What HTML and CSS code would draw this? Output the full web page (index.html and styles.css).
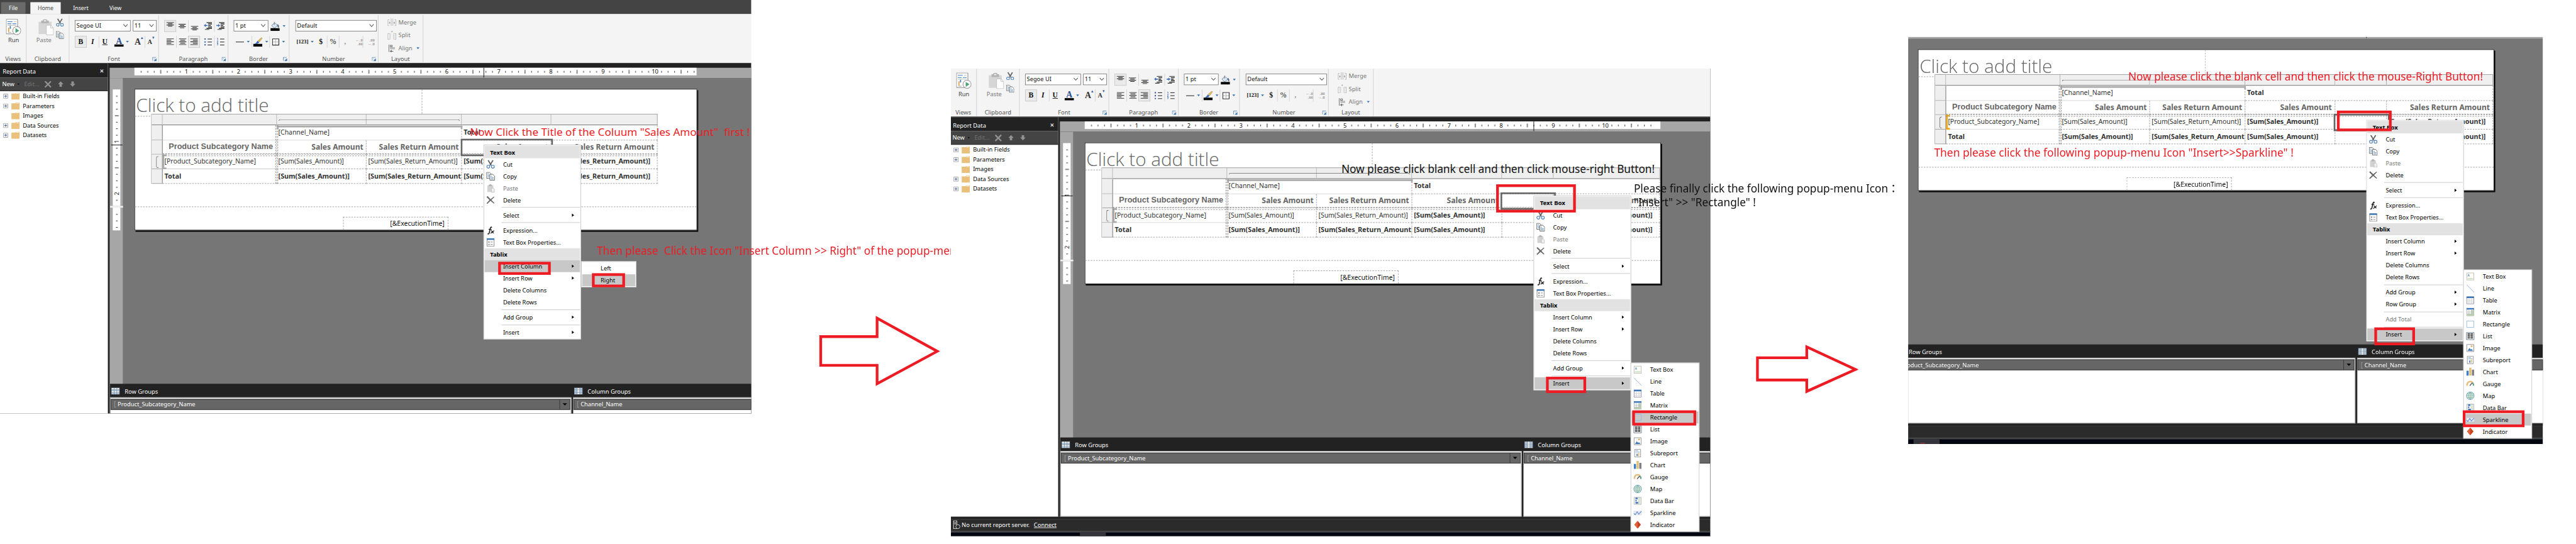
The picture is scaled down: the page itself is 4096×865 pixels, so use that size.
FILE: index.html
```html
<!DOCTYPE html>
<html lang="en">
<head>
<meta charset="utf-8">
<title>Report Builder steps</title>
<link rel="stylesheet" href="styles.css">
</head>
<body>
<svg class="defs" width="0" height="0" aria-hidden="true">
  <defs>
    <pattern id="hticks" width="96" height="14" patternUnits="userSpaceOnUse">
      <path d="M12.5 6v3M24.500 6v3M36.500 6v3M60.500 6v3M72.500 6v3M84.500 6v3M48.500 4v7" stroke="#000" fill="none"/>
    </pattern>
    <pattern id="vticks" width="14" height="96" patternUnits="userSpaceOnUse">
      <path d="M6 12.500h3M6 24.500h3M6 36.500h3M6 60.500h3M6 72.500h3M6 84.500h3M4 48.500h7" stroke="#000" fill="none"/>
    </pattern>
    <symbol id="run" viewBox="0 0 28 30"><path d="M.5.5h21v27H.5z" fill="#fff" stroke="#777"/><path d="M3 5h9M3 9h7M12 9h7" stroke="#3f7fc1" stroke-width="1.300"/><path d="M14 5h5M3 12h16M14 16h4" stroke="#b5b5b5"/><path d="M4 24v-8h2v8z" fill="#e0a040"/><path d="M7 18v-5h2v5z" fill="#3f7fc1"/><path d="M4 25h6" stroke="#999"/><circle cx="20" cy="21.500" r="7.500" fill="#fff" stroke="#777"/><path d="M17.500 17l7 4.500-7 4.500z" fill="#4ba37a"/></symbol>
    <symbol id="paste" viewBox="0 0 28 30"><path d="M0 5h24v23H0z" fill="#d6d6d6"/><path d="M5 3h3V1.500Q12-1 16 1.500V3h3v5H5z" fill="#b4b4b4"/><path d="M10 2.500h4v2h-4z" fill="#f4f4f4"/><path d="M14.500 11.500h8l5 5v13h-13z" fill="#fff" stroke="#bbb"/><path d="M22.500 11.500v5h5" fill="none" stroke="#bbb"/></symbol>
    <symbol id="cut" viewBox="0 0 16 16"><path d="M3.500.5l5.800 9.500M12.500.5L6.700 10" stroke="#666" stroke-width="2.200" fill="none"/><circle cx="3.800" cy="12.500" r="2.700" fill="none" stroke="#4a80b8" stroke-width="1.300"/><circle cx="12.200" cy="12.500" r="2.700" fill="none" stroke="#4a80b8" stroke-width="1.300"/></symbol>
    <symbol id="copy" viewBox="0 0 16 16"><path d="M.6 1h5.400l3 3v8H.6z" fill="#fff" stroke="#666" stroke-width="1.100"/><path d="M2.200 4h2.500M2.200 6.500h4M2.200 9h4" stroke="#4a80b8"/><path d="M6.600 4.500H12l3.400 3.300v7.600H6.600z" fill="#fff" stroke="#666" stroke-width="1.100"/><path d="M8.300 8h2.500M8.300 10.500h5.400M8.300 13h5.400" stroke="#4a80b8"/></symbol>
    <symbol id="paste-s" viewBox="0 0 16 16"><path d="M2 3h11v12H2z" fill="#d2d2d2"/><path d="M4.500 2H6V.5h3V2h1.500v2.500h-6z" fill="#b4b4b4"/><path d="M9.500 8h3.300l2.200 2v5.500H9.500z" fill="#f0f0f0" stroke="#bbb"/></symbol>
    <symbol id="del" viewBox="0 0 16 16"><path d="M.5 2.500L2.500.8 8 6.500 14 1.500l1 .8L9.500 8l5.500 5.500-1 1.200L7.800 9.500 2 15.200.5 14 6 8z" fill="#666"/></symbol>
    <symbol id="del-b" viewBox="0 0 13 13"><path d="M1 1l11 11M12 1L1 12" stroke="#929292" stroke-width="2.600" fill="none"/></symbol>
    <symbol id="fx" viewBox="0 0 16 16"><path d="M10.500 2.800Q8.500.5 7.500 4L5.500 12.500Q4.800 15.500 2.500 14.200" fill="none" stroke="#111" stroke-width="1.700"/><path d="M4.500 6h5.500M8.500 9q1.500-1 2.500 1.500t3 2M14.500 8.500L8 13.500" fill="none" stroke="#111" stroke-width="1.400"/></symbol>
    <symbol id="prop" viewBox="0 0 16 16"><path d="M1.500 1.500h13v14h-13z" fill="#fff" stroke="#777"/><path d="M1 .5h14v3H1z" fill="#4179b5"/><circle cx="5" cy="7.500" r="1.200" fill="#666"/><circle cx="5" cy="12" r="1" fill="none" stroke="#777"/><path d="M8 7.500h4M8 12h4" stroke="#777"/></symbol>
    <symbol id="chev" viewBox="0 0 9 6"><path d="M.7.8L4.500 5 8.300.8" fill="none" stroke="#555" stroke-width="1.200"/></symbol>
    <symbol id="tri" viewBox="0 0 6 4"><path d="M.3.3h5.400L3 3.700z" fill="#3c74b0"/></symbol>
    <symbol id="launch" viewBox="0 0 8 8"><path d="M.6 7V.7h6.500" fill="none" stroke="#4a80b8"/><path d="M3 3l3.500 3.500M7.400 3v4.500H3z" stroke="#4a80b8" fill="#4a80b8" stroke-width=".7"/></symbol>
    <symbol id="al" viewBox="0 0 14 12"><path d="M0 .6h14M0 3.300h9M0 6h14M0 8.700h9M0 11.400h14" stroke="#000" stroke-width="1.100"/></symbol>
    <symbol id="ac" viewBox="0 0 14 12"><path d="M0 .6h14M2.500 3.300h9M0 6h14M2.500 8.700h9M0 11.400h14" stroke="#000" stroke-width="1.100"/></symbol>
    <symbol id="ar" viewBox="0 0 14 12"><path d="M0 .6h14M5 3.300h9M0 6h14M5 8.700h9M0 11.400h14" stroke="#000" stroke-width="1.100"/></symbol>
    <symbol id="va" viewBox="0 0 14 8"><path d="M0 .6h14M3 2.900h8M0 5.200h14M3 7.400h8" stroke="#000" stroke-width="1.100"/></symbol>
    <symbol id="ind" viewBox="0 0 16 14"><path d="M5 .6h10M8 3.300h7M8 6h5M8 8.700h7M5 11.400h10M2 13.600h8" stroke="#000" stroke-width="1.300"/><path d="M0 6l3.500-3v2H7v2H3.500v2z" fill="#3a6fb5"/></symbol>
    <symbol id="out" viewBox="0 0 16 14"><path d="M5 .6h10M8 3.300h7M8 6h5M8 8.700h7M5 11.400h10M2 13.600h8" stroke="#000" stroke-width="1.300"/><path d="M7 6L3.500 3v2H0v2h3.500v2z" fill="#3a6fb5"/></symbol>
    <symbol id="bul" viewBox="0 0 14 14"><path d="M6 2h8M6 7.500h8M6 13h8" stroke="#111" stroke-width="1.100"/><path d="M0 .8h2.500v2.400H0zM0 6.300h2.500v2.400H0zM0 11.600h2.500V14H0z" fill="#3a62a8"/></symbol>
    <symbol id="num" viewBox="0 0 14 14"><path d="M6 2h8M6 7.500h8M6 13h8" stroke="#111" stroke-width="1.100"/><path d="M0 1l1.500-.8V4M0 5.600h2.300L.3 9h2.400M0 10.500h2.500l-1.200 1.400q1.800 1-1.300 1.900" fill="none" stroke="#3a62a8" stroke-width=".9"/></symbol>
    <symbol id="bucket" viewBox="0 0 17 17"><path d="M2 7L8 2l5 5-6 5z" fill="#dfe8f2" stroke="#5b7da8"/><path d="M7 0v6M13 5q3 1 2 6-2-1-2-5z" stroke="#6b6b6b" fill="#3a6fb5"/><path d="M0 12h17v5H0z"/></symbol>
    <symbol id="brush" viewBox="0 0 17 17"><path d="M15.500 0L17 1.500 11 9 8 7z" fill="#e0bb62" stroke="#8a6d2c" stroke-width=".5"/><path d="M8 6.500l3 2.500q-2 4-8 2.500 3-1 5-5z" fill="#2f66bd"/><path d="M0 12h17v5H0z"/></symbol>
    <symbol id="bord" viewBox="0 0 13 13"><path d="M.6.6h11.800v11.800H.6z" fill="#fff" stroke="#000" stroke-width="1.200"/><path d="M6.500 2v9M2 6.500h9" stroke="#555" stroke-dasharray="1 1"/></symbol>
    <symbol id="merge" viewBox="0 0 16 14"><path d="M3 2.500H.5v11H3M13 2.500h2.500v11H13" fill="none" stroke="#aaa"/><path d="M5 0h6v14H5z" fill="#dcdcdc"/><path d="M2.500 5.500l3 2.500-3 2.500zM13.500 5.500l-3 2.500 3 2.500z" fill="#aaa"/></symbol>
    <symbol id="split" viewBox="0 0 16 16"><path d="M3 5H.5v10.500H3M13 5h2.500v10.500H13" fill="none" stroke="#aaa"/><path d="M3 4h3v12H3zM10 4h3v12h-3z" fill="#dcdcdc"/><path d="M6 0h4L8 3z" fill="#aaa"/></symbol>
    <symbol id="align" viewBox="0 0 13 15"><path d="M1 0v14M3.500 1.500H7v2.500H3.500z" stroke="#777" fill="none" stroke-width="1.200"/><path d="M3 5h9v4H3z" fill="#bcbcbc"/><path d="M4 12.500h5M6 10.500l-2.500 2L6 14.500" stroke="#666" fill="none" stroke-width="1.200"/></symbol>
    <symbol id="plus" viewBox="0 0 9 9"><path d="M.5.5h8v8h-8z" fill="#f6f6f6" stroke="#999"/><path d="M2 4.500h5M4.500 2v5" stroke="#33518f"/></symbol>
    <symbol id="folder" viewBox="0 0 15 13"><path d="M0 1.500h7L8.500 0H15v13H0z" fill="#e9c17c"/><path d="M8.500 1.300h5.500" stroke="#fff"/></symbol>
    <symbol id="up" viewBox="0 0 10 10"><path d="M5 0l5 5.500H7.200V10H2.800V5.500H0z" fill="#929292"/></symbol>
    <symbol id="down" viewBox="0 0 10 10"><path d="M5 10l5-5.500H7.200V0H2.800v4.500H0z" fill="#929292"/></symbol>
    <symbol id="rows" viewBox="0 0 16 13"><path d="M0 0h16v13H0z" fill="#8193a5"/><path d="M1 1h4v2H1zM6 1h4v2H6zM11 1h4v2h-4zM1 7h4v2H1zM6 7h4v2H6zM11 7h4v2h-4z" fill="#fff"/><path d="M1 4h4v2H1zM6 4h4v2H6zM11 4h4v2h-4zM1 10h4v2H1zM6 10h4v2H6zM11 10h4v2h-4z" fill="#b9d0e6"/></symbol>
    <symbol id="cols" viewBox="0 0 16 13"><path d="M0 0h16v13H0z" fill="#8193a5"/><path d="M6 1h4v2H6zM6 4h4v2H6zM6 7h4v2H6zM6 10h4v2H6z" fill="#fff"/><path d="M1 1h4v2H1zM1 4h4v2H1zM1 7h4v2H1zM1 10h4v2H1zM11 1h4v2h-4zM11 4h4v2h-4zM11 7h4v2h-4zM11 10h4v2h-4z" fill="#b9d0e6"/></symbol>
    <symbol id="server" viewBox="0 0 14 16"><path d="M1 .7h6v14.600H1zM2.500 4h3M2.500 6.500h3" fill="none" stroke="#eee" stroke-width="1.200"/><circle cx="9" cy="11.500" r="3.800" fill="#2b2b2b" stroke="#ddd"/></symbol>
    <symbol id="textbox" viewBox="0 0 16 16"><path d="M1.500 1.500h13v13h-13z" fill="#fffdf4" stroke="#b8b8b0"/><path d="M3.500 8L5 3.500 6.500 8M4 6.500h2" fill="none" stroke="#6d9ccc"/><path d="M3 12h10" stroke="#9cc4a4"/></symbol>
    <symbol id="line" viewBox="0 0 16 16"><path d="M1 1l14 14" stroke="#7fa6d8" fill="none"/></symbol>
    <symbol id="table" viewBox="0 0 16 16"><path d="M1.500 1.500h13v13h-13z" fill="#fff" stroke="#8a8aa6"/><path d="M1 1h14v3H1z" fill="#3d78bd"/><path d="M5.500 5v9M10.500 5v9M2 7.500h12M2 11h12" stroke="#ccc"/></symbol>
    <symbol id="matrix" viewBox="0 0 16 16"><path d="M1.500 1.500h13v13h-13z" fill="#fff" stroke="#aaa"/><path d="M10 4h4.500v10.500H2V11h8z" fill="#b9d6b0"/><path d="M1 0h14v3H1z" fill="#3d78bd"/><path d="M5.500 4v10M10 4v10M2 7.500h12M2 11h12" stroke="#bbb"/></symbol>
    <symbol id="rect" viewBox="0 0 16 16"><path d="M1.500 2h13v12h-13z" fill="none" stroke="#8fb8e2"/></symbol>
    <symbol id="list" viewBox="0 0 16 16"><path d="M1 1.500h14v13H1z" fill="#fff" stroke="#5b6b80"/><path d="M3 4h4.500M3 6.500h4.500M3 9h4.500M3 11.500h4.500M8.500 4H13M8.500 6.500H13M8.500 9H13M8.500 11.500H13" stroke="#000" stroke-width="1.400"/></symbol>
    <symbol id="image" viewBox="0 0 16 16"><path d="M1.500 1.500h13v13h-13z" fill="#fff" stroke="#888"/><path d="M3 13l3.500-5 2.500 3 1.500-1.500L13 13z" fill="#3d78bd"/><path d="M10.500 2.500v4M8.500 4.500h4" stroke="#e0b060" stroke-width="1.500"/></symbol>
    <symbol id="sub" viewBox="0 0 16 16"><path d="M2.500 1h11v14h-11z" fill="#fff" stroke="#888"/><path d="M4 3.500h5M4 6h8" stroke="#6f9ccf"/><path d="M6 9h2v4H6z" fill="#3d78bd"/><path d="M9 7.500h2V13H9z" fill="#e0bb72"/></symbol>
    <symbol id="chart" viewBox="0 0 16 16"><path d="M1 6h4v9H1z" fill="#3d7fc4"/><path d="M6 0h4v15H6z" fill="#e0bf78"/><path d="M11 4h4v11h-4z" fill="#808080"/></symbol>
    <symbol id="gauge" viewBox="0 0 16 16"><path d="M2 11.500Q2 4 8 4q3 0 4.500 1.500" fill="none" stroke="#e5bf80" stroke-width="3"/><path d="M12.500 6q1.500 2 1.500 5.500" fill="none" stroke="#5aa083" stroke-width="2.500"/><path d="M7 11.500L12 6" stroke="#555" stroke-width="1.500"/></symbol>
    <symbol id="map" viewBox="0 0 16 16"><circle cx="8" cy="8" r="7" fill="#f3faf6" stroke="#4b86b8"/><path d="M1 8h14M2 4.500h12M2 11.500h12M8 1v14M8 1q-7 7 0 14M8 1q7 7 0 14" fill="none" stroke="#68a58c" stroke-width=".9"/></symbol>
    <symbol id="dbar" viewBox="0 0 16 16"><path d="M1.500 1.500h13v13h-13z" fill="#f2f5f0" stroke="#aab5aa"/><path d="M4 2h4v3H4zM4 6h2v3H4zM4 10h5v3H4z" fill="#3d6fc4"/><path d="M10 2v12M12 2v12" stroke="#a8c4b0" stroke-dasharray="2 1"/></symbol>
    <symbol id="spark" viewBox="0 0 16 16"><path d="M1 5h14v7H1z" fill="#e9eefa" stroke="#c6cfe0" stroke-width=".6"/><path d="M1 9l2.500 2.500L7 6l3 4.500L15 5" fill="none" stroke="#6183cb" stroke-width="1.200"/></symbol>
    <symbol id="diamond" viewBox="0 0 16 16"><path d="M8 1l6 7-6 7-6-7z" fill="#c9401f"/><path d="M8 1v14L2 8z" fill="#e26440"/></symbol>
  </defs>
</svg>

<div class="viewport"><main class="stage">

  <!-- Step 1 -->
  <section class="win win-1">
    <nav class="tabs"><span class="tab file">File</span><span class="tab active">Home</span><span class="tab">Insert</span><span class="tab">View</span></nav>
    <div class="ribbon">
      <div class="group g-views"><div class="big"><svg width="28" height="30"><use href="#run"/></svg><span>Run</span></div><footer>Views</footer></div>
      <div class="group g-clip"><div class="clip"><div class="big dim"><svg width="28" height="30"><use href="#paste"/></svg><span>Paste</span></div><div class="stack"><svg width="15" height="15"><use href="#cut"/></svg><svg width="15" height="15"><use href="#copy"/></svg></div></div><footer>Clipboard</footer></div>
      <div class="group g-font">
        <div class="tools"><span class="select w-font">Segoe UI<svg width="9" height="6"><use href="#chev"/></svg></span><span class="select w-size">11<svg width="9" height="6"><use href="#chev"/></svg></span></div>
        <div class="tools"><b class="btn on">B</b><i class="btn">I</i><u class="btn sep">U</u><span class="btn wide"><span class="fcolor">A</span><svg width="6" height="4"><use href="#tri"/></svg></span><span class="btn grow">A<sup>▴</sup></span><span class="btn shrink sep">A<sup>▾</sup></span></div>
        <footer>Font<svg width="8" height="8"><use href="#launch"/></svg></footer>
      </div>
      <div class="group g-para">
        <div class="tools"><span class="btn on top"><svg width="14" height="8"><use href="#va"/></svg></span><span class="btn"><svg width="14" height="8"><use href="#va"/></svg></span><span class="btn sep bottom"><svg width="14" height="8"><use href="#va"/></svg></span><span class="btn far"><svg width="16" height="14"><use href="#ind"/></svg></span><span class="btn sep"><svg width="16" height="14"><use href="#out"/></svg></span></div>
        <div class="tools"><span class="btn"><svg width="14" height="12"><use href="#al"/></svg></span><span class="btn sep"><svg width="14" height="12"><use href="#ac"/></svg></span><span class="btn on"><svg width="14" height="12"><use href="#ar"/></svg></span><span class="btn far"><svg width="14" height="14"><use href="#bul"/></svg></span><span class="btn sep"><svg width="14" height="14"><use href="#num"/></svg></span></div>
        <footer>Paragraph<svg width="8" height="8"><use href="#launch"/></svg></footer>
      </div>
      <div class="group g-bord">
        <div class="tools"><span class="select w-pt">1 pt<svg width="9" height="6"><use href="#chev"/></svg></span><span class="btn drop"><svg width="17" height="17"><use href="#bucket"/></svg><svg width="6" height="4"><use href="#tri"/></svg></span></div>
        <div class="tools"><span class="btn drop"><span class="dash"></span><svg width="6" height="4"><use href="#tri"/></svg></span><span class="btn drop sep"><svg width="17" height="17"><use href="#brush"/></svg><svg width="6" height="4"><use href="#tri"/></svg></span><span class="btn drop sep"><svg width="13" height="13"><use href="#bord"/></svg><svg width="6" height="4"><use href="#tri"/></svg></span></div>
        <footer>Border<svg width="8" height="8"><use href="#launch"/></svg></footer>
      </div>
      <div class="group g-num">
        <div class="tools"><span class="select w-fmt">Default<svg width="9" height="6"><use href="#chev"/></svg></span></div>
        <div class="tools"><span class="btn drop n123">[123]<svg width="6" height="4"><use href="#tri"/></svg></span><b class="btn">$</b><span class="btn sep pct">%</span><b class="btn sep comma">,</b><span class="btn dec"><em>←.0</em><em>.00</em></span><span class="btn dec sep"><em>.00</em><em>→.0</em></span></div>
        <footer>Number<svg width="8" height="8"><use href="#launch"/></svg></footer>
      </div>
      <div class="group g-lay">
        <div class="cmd"><svg width="16" height="14"><use href="#merge"/></svg>Merge</div><div class="cmd"><svg width="16" height="16"><use href="#split"/></svg>Split</div><div class="cmd"><svg width="16" height="15"><use href="#align"/></svg>Align<svg width="6" height="4"><use href="#tri"/></svg></div>
        <footer>Layout</footer>
      </div>
    </div>
    <div class="body">
      <aside class="data">
        <header>Report Data<b>✕</b></header>
        <div class="bar"><span>New</span><span class="caret"></span><span class="off">Edit...</span><svg width="13" height="13"><use href="#del-b"/></svg><svg width="10" height="10"><use href="#up"/></svg><svg width="10" height="10"><use href="#down"/></svg></div>
        <ul>
          <li><svg width="9" height="9"><use href="#plus"/></svg><svg width="15" height="13"><use href="#folder"/></svg>Built-in Fields</li>
          <li><svg width="9" height="9"><use href="#plus"/></svg><svg width="15" height="13"><use href="#folder"/></svg>Parameters</li>
          <li class="leaf"><svg width="15" height="13"><use href="#folder"/></svg>Images</li>
          <li><svg width="9" height="9"><use href="#plus"/></svg><svg width="15" height="13"><use href="#folder"/></svg>Data Sources</li>
          <li><svg width="9" height="9"><use href="#plus"/></svg><svg width="15" height="13"><use href="#folder"/></svg>Datasets</li>
        </ul>
      </aside>
      <div class="design">
        <div class="hruler"><div class="scale"><svg width="1037" height="14"><rect width="1037" height="14" fill="url(#hticks)"/></svg><div class="nums"><span>1</span><span>2</span><span>3</span><span>4</span><span>5</span><span>6</span><span>7</span><span>8</span><span>9</span><span>10</span></div></div><i class="mark m1"></i></div>
        <div class="work">
          <div class="vruler"><div class="vscale"><svg width="14" height="215"><rect width="14" height="215" fill="url(#vticks)"/></svg><div class="vnums"><span>1</span><span>2</span></div></div><div class="gap"></div><div class="vscale foot"><svg width="14" height="42"><rect width="14" height="42" fill="url(#vticks)"/></svg></div><i class="vmark"></i></div>
          <div class="canvas"><div class="page">
            <div class="title">Click to add title</div>
            <div class="tablix cols-5">
              <i class="h"></i><i class="h"></i><i class="h"></i><i class="h"></i><i class="h"></i><i class="h"></i>
              <i class="r"></i><span class="c solid"></span><span class="c span2">[Channel_Name]</span><b class="c span-total">Total</b>
              <i class="r"></i><b class="c hd arial">Product Subcategory Name</b><b class="c hd">Sales Amount</b><b class="c hd">Sales Return Amount</b><b class="c hd">Sales Amount</b><b class="c hd">Sales Return Amount</b>
              <i class="r arc"></i><span class="c solid in">[Product_Subcategory_Name]</span><span class="c">[Sum(Sales_Amount)]</span><span class="c">[Sum(Sales_Return_Amount)]</span><b class="c">[Sum(Sales_Amount)]</b><b class="c">[Sum(Sales_Return_Amount)]</b>
              <i class="r"></i><b class="c in">Total</b><b class="c">[Sum(Sales_Amount)]</b><b class="c">[Sum(Sales_Return_Amount)]</b><b class="c">[Sum(Sales_Amount)]</b><b class="c">[Sum(Sales_Return_Amount)]</b>
              <div class="colgroup"></div><div class="chan"></div><div class="rowmark"></div><div class="vgap"></div><div class="hgap"></div>
              <div class="cell-sel s1"></div>
            </div>
            <div class="exec">[&amp;ExecutionTime]</div>
          </div></div>
        </div>
        <div class="groups">
          <div class="gpane"><header><svg width="16" height="13"><use href="#rows"/></svg>Row Groups</header><div class="gbody"><div class="gitem"><i>[</i>Product_Subcategory_Name<span class="gdrop"></span></div></div></div>
          <div class="gpane right"><header><svg width="16" height="13"><use href="#cols"/></svg>Column Groups</header><div class="gbody"><div class="gitem"><i>[</i>Channel_Name</div></div></div>
        </div>
      </div>
    </div>
  </section>

  <ul class="menu ctx-1">
    <li class="cap">Text Box</li>
    <li><svg><use href="#cut"/></svg>Cut</li><li><svg><use href="#copy"/></svg>Copy</li><li class="off"><svg><use href="#paste-s"/></svg>Paste</li><li><svg><use href="#del"/></svg>Delete</li>
    <li class="rule"></li><li class="more">Select</li><li class="rule"></li>
    <li><svg><use href="#fx"/></svg>Expression...</li><li><svg><use href="#prop"/></svg>Text Box Properties...</li>
    <li class="cap">Tablix</li>
    <li class="more hot">Insert Column</li><li class="more">Insert Row</li><li>Delete Columns</li><li>Delete Rows</li>
    <li class="rule"></li><li class="more">Add Group</li><li class="rule"></li><li class="more">Insert</li>
  </ul>
  <ul class="menu side-1"><li>Left</li><li class="hot">Right</li></ul>
  <div class="box b1"></div><div class="box b2"></div>
  <p class="note n1">Now Click the Title of the Coluum "Sales Amount"&nbsp; first !</p>
  <p class="note n2">Then please&nbsp; Click the Icon "Insert Column &gt;&gt; Right" of the popup-menu</p>
  <svg class="arrow a1" width="225" height="132"><path d="M5 40h104V6l111 61-111 60V93H5z"/></svg>

  <!-- Step 2 -->
  <section class="win win-2"><div class="shift">
    <div class="ribbon">
      <div class="group g-views"><div class="big"><svg width="28" height="30"><use href="#run"/></svg><span>Run</span></div><footer>Views</footer></div>
      <div class="group g-clip"><div class="clip"><div class="big dim"><svg width="28" height="30"><use href="#paste"/></svg><span>Paste</span></div><div class="stack"><svg width="15" height="15"><use href="#cut"/></svg><svg width="15" height="15"><use href="#copy"/></svg></div></div><footer>Clipboard</footer></div>
      <div class="group g-font">
        <div class="tools"><span class="select w-font">Segoe UI<svg width="9" height="6"><use href="#chev"/></svg></span><span class="select w-size">11<svg width="9" height="6"><use href="#chev"/></svg></span></div>
        <div class="tools"><b class="btn on">B</b><i class="btn">I</i><u class="btn sep">U</u><span class="btn wide"><span class="fcolor">A</span><svg width="6" height="4"><use href="#tri"/></svg></span><span class="btn grow">A<sup>▴</sup></span><span class="btn shrink sep">A<sup>▾</sup></span></div>
        <footer>Font<svg width="8" height="8"><use href="#launch"/></svg></footer>
      </div>
      <div class="group g-para">
        <div class="tools"><span class="btn on top"><svg width="14" height="8"><use href="#va"/></svg></span><span class="btn"><svg width="14" height="8"><use href="#va"/></svg></span><span class="btn sep bottom"><svg width="14" height="8"><use href="#va"/></svg></span><span class="btn far"><svg width="16" height="14"><use href="#ind"/></svg></span><span class="btn sep"><svg width="16" height="14"><use href="#out"/></svg></span></div>
        <div class="tools"><span class="btn"><svg width="14" height="12"><use href="#al"/></svg></span><span class="btn sep"><svg width="14" height="12"><use href="#ac"/></svg></span><span class="btn on"><svg width="14" height="12"><use href="#ar"/></svg></span><span class="btn far"><svg width="14" height="14"><use href="#bul"/></svg></span><span class="btn sep"><svg width="14" height="14"><use href="#num"/></svg></span></div>
        <footer>Paragraph<svg width="8" height="8"><use href="#launch"/></svg></footer>
      </div>
      <div class="group g-bord">
        <div class="tools"><span class="select w-pt">1 pt<svg width="9" height="6"><use href="#chev"/></svg></span><span class="btn drop"><svg width="17" height="17"><use href="#bucket"/></svg><svg width="6" height="4"><use href="#tri"/></svg></span></div>
        <div class="tools"><span class="btn drop"><span class="dash"></span><svg width="6" height="4"><use href="#tri"/></svg></span><span class="btn drop sep"><svg width="17" height="17"><use href="#brush"/></svg><svg width="6" height="4"><use href="#tri"/></svg></span><span class="btn drop sep"><svg width="13" height="13"><use href="#bord"/></svg><svg width="6" height="4"><use href="#tri"/></svg></span></div>
        <footer>Border<svg width="8" height="8"><use href="#launch"/></svg></footer>
      </div>
      <div class="group g-num">
        <div class="tools"><span class="select w-fmt">Default<svg width="9" height="6"><use href="#chev"/></svg></span></div>
        <div class="tools"><span class="btn drop n123">[123]<svg width="6" height="4"><use href="#tri"/></svg></span><b class="btn">$</b><span class="btn sep pct">%</span><b class="btn sep comma">,</b><span class="btn dec"><em>←.0</em><em>.00</em></span><span class="btn dec sep"><em>.00</em><em>→.0</em></span></div>
        <footer>Number<svg width="8" height="8"><use href="#launch"/></svg></footer>
      </div>
      <div class="group g-lay">
        <div class="cmd"><svg width="16" height="14"><use href="#merge"/></svg>Merge</div><div class="cmd"><svg width="16" height="16"><use href="#split"/></svg>Split</div><div class="cmd"><svg width="16" height="15"><use href="#align"/></svg>Align<svg width="6" height="4"><use href="#tri"/></svg></div>
        <footer>Layout</footer>
      </div>
    </div>
    <div class="body">
      <aside class="data">
        <header>Report Data<b>✕</b></header>
        <div class="bar"><span>New</span><span class="caret"></span><span class="off">Edit...</span><svg width="13" height="13"><use href="#del-b"/></svg><svg width="10" height="10"><use href="#up"/></svg><svg width="10" height="10"><use href="#down"/></svg></div>
        <ul>
          <li><svg width="9" height="9"><use href="#plus"/></svg><svg width="15" height="13"><use href="#folder"/></svg>Built-in Fields</li>
          <li><svg width="9" height="9"><use href="#plus"/></svg><svg width="15" height="13"><use href="#folder"/></svg>Parameters</li>
          <li class="leaf"><svg width="15" height="13"><use href="#folder"/></svg>Images</li>
          <li><svg width="9" height="9"><use href="#plus"/></svg><svg width="15" height="13"><use href="#folder"/></svg>Data Sources</li>
          <li><svg width="9" height="9"><use href="#plus"/></svg><svg width="15" height="13"><use href="#folder"/></svg>Datasets</li>
        </ul>
      </aside>
      <div class="design">
        <div class="hruler"><div class="scale wide-scale"><svg width="1062" height="14"><rect width="1062" height="14" fill="url(#hticks)"/></svg><div class="nums"><span>1</span><span>2</span><span>3</span><span>4</span><span>5</span><span>6</span><span>7</span><span>8</span><span>9</span><span>10</span></div></div><i class="mark m2"></i></div>
        <div class="work">
          <div class="vruler"><div class="vscale"><svg width="14" height="215"><rect width="14" height="215" fill="url(#vticks)"/></svg><div class="vnums"><span>1</span><span>2</span></div></div><div class="gap"></div><div class="vscale foot"><svg width="14" height="42"><rect width="14" height="42" fill="url(#vticks)"/></svg></div><i class="vmark high"></i></div>
          <div class="canvas"><div class="page wide-page">
            <div class="title">Click to add title</div>
            <div class="tablix cols-6">
              <i class="h"></i><i class="h"></i><i class="h"></i><i class="h"></i><i class="h"></i><i class="h"></i><i class="h"></i>
              <i class="r"></i><span class="c solid"></span><span class="c span2">[Channel_Name]</span><b class="c span-total">Total</b>
              <i class="r"></i><b class="c hd arial">Product Subcategory Name</b><b class="c hd">Sales Amount</b><b class="c hd">Sales Return Amount</b><b class="c hd">Sales Amount</b><b class="c"></b><b class="c hd">Sales Return Amount</b>
              <i class="r arc"></i><span class="c solid in">[Product_Subcategory_Name]</span><span class="c">[Sum(Sales_Amount)]</span><span class="c">[Sum(Sales_Return_Amount)]</span><b class="c">[Sum(Sales_Amount)]</b><b class="c"></b><b class="c">[Sum(Sales_Return_Amount)]</b>
              <i class="r"></i><b class="c in">Total</b><b class="c">[Sum(Sales_Amount)]</b><b class="c">[Sum(Sales_Return_Amount)]</b><b class="c">[Sum(Sales_Amount)]</b><b class="c"></b><b class="c">[Sum(Sales_Return_Amount)]</b>
              <div class="colgroup"></div><div class="chan"></div><div class="rowmark"></div><div class="vgap"></div><div class="hgap"></div>
              <div class="cell-sel s2"></div>
            </div>
            <div class="exec">[&amp;ExecutionTime]</div>
          </div></div>
        </div>
        <div class="groups tall">
          <div class="gpane"><header><svg width="16" height="13"><use href="#rows"/></svg>Row Groups</header><div class="gbody"><div class="gitem"><i>[</i>Product_Subcategory_Name<span class="gdrop"></span></div></div></div>
          <div class="gpane right"><header><svg width="16" height="13"><use href="#cols"/></svg>Column Groups</header><div class="gbody"><div class="gitem"><i>[</i>Channel_Name</div></div></div>
        </div>
      </div>
    </div>
    <div class="status"><svg width="14" height="16"><use href="#server"/></svg>No current report server.<u>Connect</u></div>
    <div class="task"><i></i></div>
  </div></section>

  <ul class="menu ctx-2">
    <li class="cap">Text Box</li>
    <li><svg><use href="#cut"/></svg>Cut</li><li><svg><use href="#copy"/></svg>Copy</li><li class="off"><svg><use href="#paste-s"/></svg>Paste</li><li><svg><use href="#del"/></svg>Delete</li>
    <li class="rule"></li><li class="more">Select</li><li class="rule"></li>
    <li><svg><use href="#fx"/></svg>Expression...</li><li><svg><use href="#prop"/></svg>Text Box Properties...</li>
    <li class="cap">Tablix</li>
    <li class="more">Insert Column</li><li class="more">Insert Row</li><li>Delete Columns</li><li>Delete Rows</li>
    <li class="rule"></li><li class="more">Add Group</li><li class="rule"></li><li class="more hot">Insert</li>
  </ul>
  <ul class="menu side-2">
    <li><svg><use href="#textbox"/></svg>Text Box</li><li><svg><use href="#line"/></svg>Line</li><li><svg><use href="#table"/></svg>Table</li><li><svg><use href="#matrix"/></svg>Matrix</li><li class="hot"><svg><use href="#rect"/></svg>Rectangle</li><li><svg><use href="#list"/></svg>List</li><li><svg><use href="#image"/></svg>Image</li><li><svg><use href="#sub"/></svg>Subreport</li><li><svg><use href="#chart"/></svg>Chart</li><li><svg><use href="#gauge"/></svg>Gauge</li><li><svg><use href="#map"/></svg>Map</li><li><svg><use href="#dbar"/></svg>Data Bar</li><li><svg><use href="#spark"/></svg>Sparkline</li><li><svg><use href="#diamond"/></svg>Indicator</li>
  </ul>
  <div class="box b3"></div><div class="box b4"></div><div class="box b5"></div>
  <p class="note dark n3">Now please click blank cell and then click mouse-right Button!</p>
  <p class="note dark n4">Please finally click the following popup-menu Icon：
"Insert" &gt;&gt; "Rectangle" !</p>
  <svg class="arrow a2" width="190" height="92"><path d="M4 25h91V5l90 41.500-90 40.500V66H4z"/></svg>

  <!-- Step 3 -->
  <section class="win win-3">
    <div class="strip"><i></i></div>
    <div class="canvas"><div class="page wide-page">
      <div class="title">Click to add title</div>
      <div class="tablix cols-6">
        <i class="h"></i><i class="h"></i><i class="h"></i><i class="h"></i><i class="h"></i><i class="h"></i><i class="h"></i>
        <i class="r"></i><span class="c solid"></span><span class="c span2">[Channel_Name]</span><b class="c span-total">Total</b>
        <i class="r"></i><b class="c hd arial">Product Subcategory Name</b><b class="c hd">Sales Amount</b><b class="c hd">Sales Return Amount</b><b class="c hd">Sales Amount</b><b class="c"></b><b class="c hd">Sales Return Amount</b>
        <i class="r arc"></i><span class="c solid in">[Product_Subcategory_Name]</span><span class="c">[Sum(Sales_Amount)]</span><span class="c">[Sum(Sales_Return_Amount)]</span><b class="c">[Sum(Sales_Amount)]</b><b class="c"></b><b class="c">[Sum(Sales_Return_Amount)]</b>
        <i class="r"></i><b class="c in">Total</b><b class="c">[Sum(Sales_Amount)]</b><b class="c">[Sum(Sales_Return_Amount)]</b><b class="c">[Sum(Sales_Amount)]</b><b class="c"></b><b class="c">[Sum(Sales_Return_Amount)]</b>
        <div class="colgroup"></div><div class="chan"></div><div class="rowmark picked"></div><div class="vgap"></div><div class="hgap"></div>
        <div class="cell-sel s3"></div>
      </div>
      <div class="exec">[&amp;ExecutionTime]</div>
    </div></div>
    <div class="groups tall">
      <div class="gpane"><header>Row Groups</header><div class="gbody"><div class="gitem">Product_Subcategory_Name<span class="gdrop"></span></div></div></div>
      <div class="gpane right"><header><svg width="16" height="13"><use href="#cols"/></svg>Column Groups</header><div class="gbody"><div class="gitem"><i>[</i>Channel_Name</div></div></div>
    </div>
    <div class="status"></div>
    <div class="task"><i></i></div>
  </section>

  <ul class="menu ctx-3">
    <li class="cap">Text Box</li>
    <li><svg><use href="#cut"/></svg>Cut</li><li><svg><use href="#copy"/></svg>Copy</li><li class="off"><svg><use href="#paste-s"/></svg>Paste</li><li><svg><use href="#del"/></svg>Delete</li>
    <li class="rule"></li><li class="more">Select</li><li class="rule"></li>
    <li><svg><use href="#fx"/></svg>Expression...</li><li><svg><use href="#prop"/></svg>Text Box Properties...</li>
    <li class="cap">Tablix</li>
    <li class="more">Insert Column</li><li class="more">Insert Row</li><li>Delete Columns</li><li>Delete Rows</li>
    <li class="rule"></li><li class="more">Add Group</li><li class="more">Row Group</li><li class="rule"></li><li class="off">Add Total</li><li class="rule"></li><li class="more hot">Insert</li>
  </ul>
  <ul class="menu side-3">
    <li><svg><use href="#textbox"/></svg>Text Box</li><li><svg><use href="#line"/></svg>Line</li><li><svg><use href="#table"/></svg>Table</li><li><svg><use href="#matrix"/></svg>Matrix</li><li><svg><use href="#rect"/></svg>Rectangle</li><li><svg><use href="#list"/></svg>List</li><li><svg><use href="#image"/></svg>Image</li><li><svg><use href="#sub"/></svg>Subreport</li><li><svg><use href="#chart"/></svg>Chart</li><li><svg><use href="#gauge"/></svg>Gauge</li><li><svg><use href="#map"/></svg>Map</li><li><svg><use href="#dbar"/></svg>Data Bar</li><li class="hot"><svg><use href="#spark"/></svg>Sparkline</li><li><svg><use href="#diamond"/></svg>Indicator</li>
  </ul>
  <div class="box b6"></div><div class="box b7"></div><div class="box b8"></div>
  <p class="note n5">Now please click the blank cell and then click the mouse-Right Button!</p>
  <p class="note n6">Then please click the following popup-menu Icon "Insert&gt;&gt;Sparkline" !</p>
</main></div>
</body>
</html>
```
FILE: styles.css
```css
*{box-sizing:border-box}
html,body{margin:0;height:865px;overflow:hidden;background:#fff}
ul,p{margin:0;padding:0;list-style:none}
svg{display:block;flex:none}
.defs{position:absolute}
.viewport{width:4096px;height:865px;overflow:hidden;contain:strict}
.stage{position:relative;width:4752px;height:1003px;transform:scale(.86195);transform-origin:0 0;font:10.8px/14px "Noto Sans","Open Sans",sans-serif;color:#111}

/* windows */
.win{position:absolute;overflow:hidden;background:#fff}
.win-1{left:0;top:0;width:1386px;height:763px}
.win-2{left:1754px;top:126px;width:1401px;height:863px}
.win-3{left:3520px;top:68px;width:1171px;height:751px}
.shift{width:1402px;margin:-1px 0 0 -1px}

/* ribbon */
.tabs{height:26px;background:#444;color:#fff;display:flex;align-items:flex-end;padding-left:2px;font-size:10.200px}
.tab{width:64px;height:22px;text-align:center;line-height:22px}
.tab.file{width:45px;height:21px;margin:0 9px 1px 0;background:#6a6a6a;line-height:20px}
.tab.active{width:56px;background:#f4f4f4;color:#444;margin-right:5px}
.ribbon{height:91px;background:#f4f4f4;border-bottom:1px solid #333;display:flex;color:#444}
.group{position:relative;height:87px;margin-top:2px;border-right:1px solid #ccc;padding-top:9px}
.group footer{position:absolute;left:0;right:0;bottom:0;height:14px;text-align:center;color:#555}
.group footer svg{position:absolute;right:3px;top:4px}
.g-views{width:49px}.g-clip{width:79px}.g-font{width:165px;padding-left:10px}.g-para{width:128px;padding-left:10px}
.g-bord{width:113px;padding-left:10px}.g-num{width:164px;padding-left:11px}.g-lay{width:82.500px;padding:1px 0 0 17px}
.big{display:flex;flex-direction:column;align-items:center;gap:3px;margin-top:-2px;padding-left:2px}
.big.dim{color:#777;width:56px;margin-left:3px;padding-left:0}
.big.dim svg{margin-left:7px}
.big span{margin-top:-1px}
.clip{display:flex}
.g-clip .clip .big{width:58px}
.stack{display:flex;flex-direction:column;gap:8px;margin:-3px 0 0 -7px}
.tools{display:flex;height:22px;align-items:stretch}
.tools+.tools{margin-top:7px}
.select{background:#fff;border:1px solid #777;color:#111;display:flex;align-items:center;justify-content:space-between;padding:0 4px 1px 2px;height:21px}
.w-font{width:103px;margin-right:4px}.w-size{width:44px}.w-pt{width:64px;margin-right:1px}.w-fmt{width:150px}
.btn{width:22px;display:flex;align-items:center;justify-content:center;font:bold 13.500px/16px "Liberation Serif",serif;color:#111}
.btn.on{background:#eaeaea;border:1px solid #c8c8c8}
i.btn{font-style:italic}
.btn.sep{border-left:1px solid #d0d0d0}
.btn.far{margin-left:4px}
.btn.top{padding-bottom:7px}
.btn.bottom{padding-top:7px}
.btn.wide{width:41px;gap:4px}
.fcolor{width:17px;height:17px;border-bottom:4px solid #000;color:#2f4f93;text-align:center;font-size:16px;line-height:13px}
.btn.grow{font-size:16px;color:#333}
.btn.shrink{font-size:12px;color:#333}
.btn sup{font:8px/8px "DejaVu Sans",sans-serif;color:#3c5f9c;align-self:flex-start}
.btn.drop{width:33px;gap:5px}
.dash{width:15px;height:1px;background:#000}
.btn.n123{font-size:10px;width:36px;gap:4px}
.pct{font-weight:400}
.comma{color:#999}
.dec{flex-direction:column;font:bold 7.500px/7px "Liberation Serif",serif;color:#999;align-items:flex-end}
.dec em{font-style:normal}
.cmd{display:flex;align-items:center;height:24px;gap:4px;color:#777}
.cmd>svg+svg,.cmd svg:last-child:not(:first-child){margin-left:3px}

/* body */
.body{display:flex;background:#222}
.data{width:199px;background:#fff}
.data header{height:26px;background:#222;color:#fff;display:flex;justify-content:space-between;align-items:center;padding:4px 5px 0}
.data header b{font:bold 10px/12px "DejaVu Sans",sans-serif;margin-right:2px}
.bar{height:25px;background:#444;border-bottom:1px solid #222;display:flex;align-items:center;color:#fff;padding-left:4px}
.caret{border:2.500px solid transparent;border-top:3px solid #111;border-bottom:0;margin:0 9px 0 5px}
.bar .off{color:#727272;margin-right:9px}
.bar svg{margin-right:12px}
.data ul{padding:0 0 0 6px}
.data li{height:18px;display:flex;align-items:center;gap:6px;color:#000}
.data li.leaf{padding-left:15px}
.design{flex:1;min-width:0;margin-left:3px;margin-top:8px;border-left:1px solid #888}
.hruler{position:relative;height:19px;background:#a6a6a6;padding-left:45px}
.scale{position:relative;width:1037px;height:14px;background:#fff}
.wide-scale{width:1062px}
.nums{position:absolute;left:48px;top:0;display:flex;line-height:14px}
.nums span{width:96.050px;text-align:center}
.mark{position:absolute;top:0;width:1px;height:18px;background:#000}
.m1{left:689px}.m2{left:873px}
.work{display:flex;height:564px}
.vruler{position:relative;width:24px;background:#a6a6a6;padding-top:21px}
.vscale{position:relative;width:14px;height:215px;margin-left:5px;background:#fff}
.vscale.foot{height:42px}
.vnums{position:absolute;left:0;top:48px}
.vnums span{display:block;width:14px;height:96px;line-height:96px;text-align:center;transform:rotate(-90deg)}
.gap{height:3px;background:#f0f0f0}
.vmark{position:absolute;left:2px;top:123px;width:21px;height:1px;background:#000}
.vmark.high{top:118px}
.canvas{flex:1;background:#767676;overflow:hidden;height:564px}

/* report page: a free drawing surface */
.page{position:relative;width:1038px;height:261px;margin:20px 0 0 21px;background:#fff;border:1px solid #000;box-shadow:2px 2.500px 0 #000}
.wide-page{width:1063px}
.title{position:absolute;left:0;top:0;width:530px;height:50px;border-right:1px dashed #999;border-bottom:1px dashed #999;padding:7px 0 0 2px;font:300 34.400px/44px "Open Sans","Noto Sans",sans-serif;color:#666;white-space:nowrap}
.exec{position:absolute;left:384px;bottom:0;width:194px;height:24px;border:1px dashed #999;border-bottom:0;text-align:right;padding:5px 6px 0 0;font-size:12.150px}
.page::after{content:"";position:absolute;left:0;right:0;top:216px;border-top:1px dashed #999}
.tablix{position:absolute;left:30px;top:45px;display:grid;grid-template-rows:21px 27.500px 26.500px 27.300px 27px;background:#fff;border-left:1px solid #999;font-size:12.100px;color:#333}
.cols-5{grid-template-columns:19.500px 211px 165.800px 176.100px 164.900px 196px}
.cols-6{grid-template-columns:19.500px 211px 165.800px 176.100px 165.300px 95.400px 196px}
.h{background:#efefef;border-top:1px solid #999;border-bottom:1px solid #666;border-right:1px solid #999}
.r{background:#efefef;border-right:1px solid #666;border-bottom:1px solid #999;padding:3px 0 0 8px}
.arc::before{content:"";display:block;width:4px;height:20px;border:solid #666;border-width:1px 0 1px 1px;border-radius:4px 0 0 4px}
.c{min-width:0;border-right:1px dashed #999;border-bottom:1px dashed #999;display:flex;align-items:center;padding:0 0 1px 3px;white-space:nowrap;overflow:hidden}
.c.solid{border-bottom:1px solid #ccc}
.c.in{padding-left:4px}
b.c{font-size:12.500px}
.c.hd{font-size:14px;color:#666;justify-content:flex-end;padding:0 5px 0 0}
.c.arial{font:bold 14.670px/16px "Liberation Sans",sans-serif;padding:0 6px 3px 0}
.span2{grid-column:span 2;border-bottom:1px solid #ccc}
.span-total{grid-column:5 / -1}
.colgroup{position:absolute;left:234px;top:10px;width:334px;height:3px;border:solid #666;border-width:1px 1px 0;border-radius:3px 3px 0 0}
.chan{position:absolute;left:231px;top:22px;width:342px;height:6px;border:solid #aaa;border-width:3.500px 3px 0}
.rowmark{position:absolute;left:20px;top:75px;width:7px;height:27px;border:solid #aaa;border-width:3px 0 3px 3.500px}
.picked{border-color:#f0a30a}
.vgap{position:absolute;left:228px;top:21px;width:5px;height:108px;border:dashed #888;border-width:0 1px}
.hgap{position:absolute;left:20px;right:0;top:73px;height:5px;border:dashed #888;border-width:1px 0}
.cell-sel{position:absolute;border:3.500px solid #666}
.s1{left:570px;top:46px;width:170px;height:32px}
.s2{left:735px;top:46px;width:102px;height:32px}
.s3{left:735px;top:73px;width:103px;height:32px}

/* grouping pane */
.groups{display:flex;height:55px;background:#222}
.groups.tall{height:146px}
.gpane{width:851px;display:flex;flex-direction:column}
.gpane.right{flex:1;width:auto;margin-left:3px}
.gpane header{height:25px;display:flex;align-items:center;gap:9px;padding:3px 0 0 2px;color:#fff}
.gpane header svg{margin-top:-2px}
.gbody{flex:1;background:#fff;border:1px solid #999;border-bottom-width:0;padding:2px 1px 0 0}
.tall .gbody{border-bottom-width:1px}
.right .gbody{border-right:0;padding-right:0}
.gitem{height:20px;background:#666;border:1px solid #333;color:#fff;display:flex;align-items:center;padding:0 0 1px 5px}
.gitem i{width:7px;color:#999;font-style:normal;font-size:12px}
.gdrop{margin-left:auto;width:19px;height:18px;margin-top:1px;border-left:1px solid #333;display:flex;align-items:center;justify-content:center}
.gdrop::after{content:"";border:4px solid transparent;border-top:4px solid #000;border-bottom:0}
.status{height:29px;background:#2b2b2b;border-top:4px solid #222;border-bottom:3px solid #444;box-shadow:inset 0 1px 0 #444;display:flex;align-items:center;color:#fff;padding-left:5px;gap:2px}
.status u{margin-left:6px}
.task{height:10px;background:#000510;padding-left:239px}
.task i{display:block;width:48px;height:10px;background:#33353a}
.win-3 .task{padding-left:10px}
.win-3 .task i{background:linear-gradient(#b8343c,#b8343c) 12px 7px/9px 1px no-repeat #33353a}

/* third window is cropped to the drawing surface */
.strip{height:3px;background:#a6a6a6}
.strip i{display:block;width:1px;height:2px;margin-left:845px;background:#000}
.win-3 .page{margin-left:18px}
.win-3 .gpane:first-child{width:825px}
.win-3 .gpane:first-child header{padding-left:1px}
.win-3 .gpane:first-child .gbody{border-left:0}
.win-3 .gpane:first-child .gitem{border-left:0;padding-left:0;text-indent:-13px;overflow:hidden}

/* menus */
.menu{position:absolute;width:180px;background:#fff;border:1px solid #c5c5c5;padding:1px;color:#000}
.menu li{height:22px;display:flex;align-items:center;padding-left:34px;white-space:nowrap}
.menu svg{width:16px;height:16px;margin:0 15px 0 -31px}
.menu .cap{height:22.500px;background:#e2e2e2;font-weight:700;font-size:11px;padding-left:10px}
.menu .rule{height:6px;padding:0}
.menu .rule::after{content:"";flex:1;height:1px;background:#c5c5c5;margin-left:31px}
.menu .off{color:#777}
.menu .hot{background:#c8c8c8}
.menu .more::after{content:"";margin:0 11px 0 auto;border:3.500px solid transparent;border-left:4px solid #000;border-right:0}
.ctx-1{left:892px;top:267.300px}
.ctx-2{left:2829px;top:361px}
.ctx-3{left:4365px;top:221.300px}
.side-1{left:1072px;top:481.500px;width:102px}
.side-2{left:3008px;top:669px;width:127px}
.side-3{left:4544px;top:497.300px;width:127px}

/* annotations */
.box{position:absolute;border:5px solid #ed1c24}
.b1{left:919px;top:483px;width:97px;height:24px}
.b2{left:1092px;top:504px;width:61px;height:26px}
.b3{left:2760px;top:340px;width:147px;height:52px}
.b4{left:2852px;top:695px;width:74px;height:30px}
.b5{left:3011px;top:757px;width:118px;height:28px}
.b6{left:4311px;top:204px;width:101px;height:38px}
.b7{left:4380px;top:604px;width:75px;height:33px}
.b8{left:4543px;top:757px;width:114px;height:31px}
.note{position:absolute;font:20px/20px "Noto Sans","Noto Sans CJK TC",sans-serif;color:#ed1c24;white-space:pre}
.dark{color:#111}
.n1{left:867px;top:233.900px;font-size:19.850px}
.n2{left:1101px;top:452.500px}
.n3{left:2474.500px;top:301.500px}
.n4{left:3014px;top:335.400px;line-height:25.600px}
.n5{left:3926px;top:131.200px}
.n6{left:3568px;top:271.200px;font-size:20.160px}
.arrow{position:absolute;fill:none;stroke:#ed1c24;stroke-width:5}
.a1{left:1509px;top:581px}
.a2{left:3238px;top:635px}
```
